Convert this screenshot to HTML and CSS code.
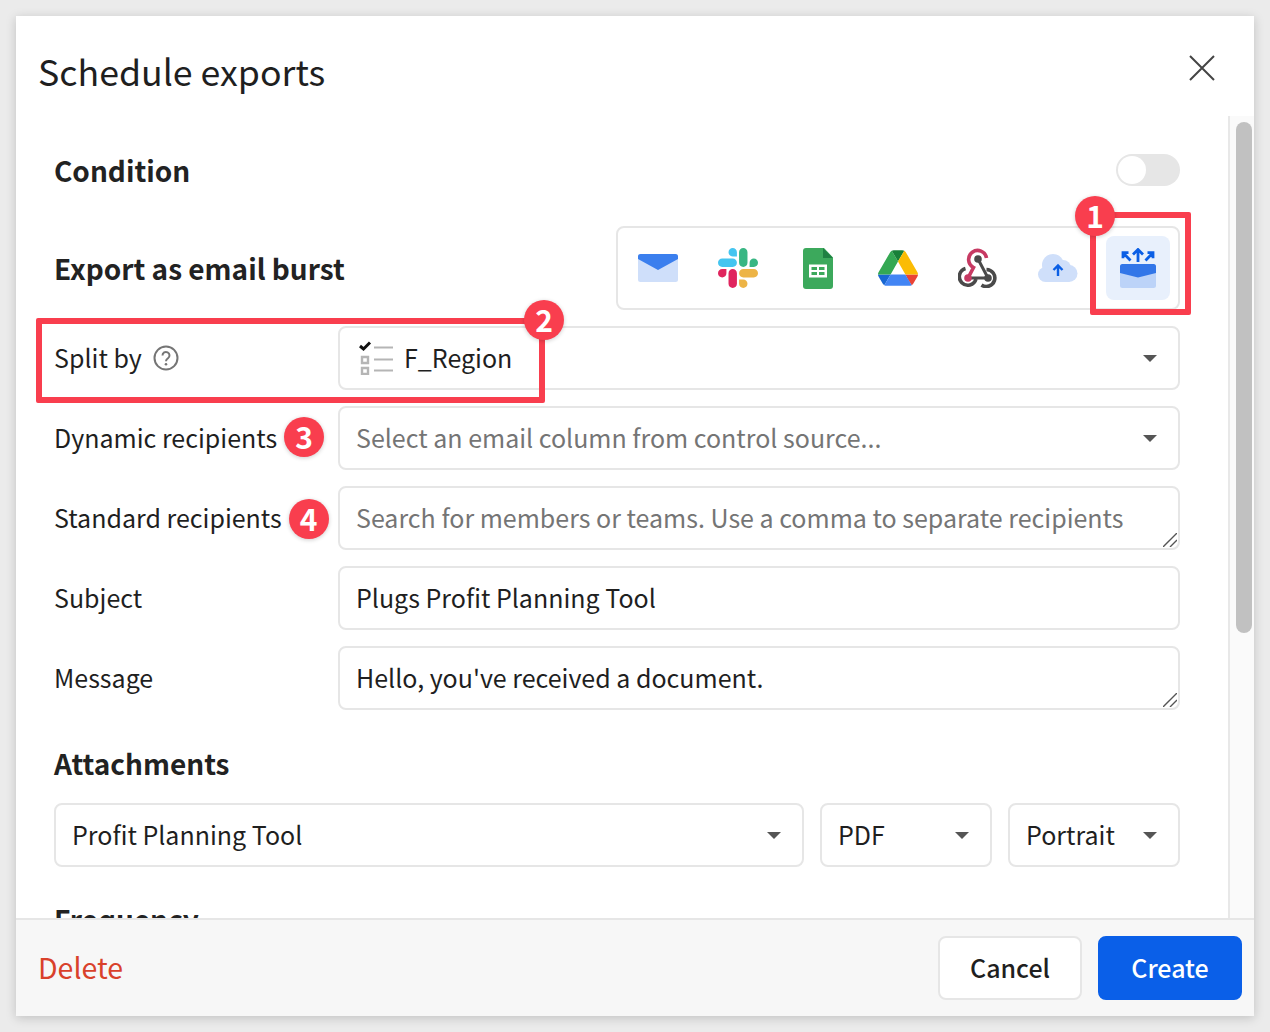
FILE: index.html
```html
<!DOCTYPE html>
<html lang="en">
<head>
<meta charset="UTF-8" />
<meta name="viewport" content="width=device-width, initial-scale=1.0" />
<title>Schedule exports</title>
<link rel="stylesheet" href="styles.css">
</head>
<body>
  <div class="dialog">
    <header class="dialog-head">
      <h1>Schedule exports</h1>
      <svg class="close" width="26" height="26" viewBox="0 0 26 26"><path d="M1 1l24 24M25 1L1 25" fill="none" stroke="#444" stroke-width="2"/></svg>
    </header>

    <div class="dialog-body">
      <div class="content">
        <div class="row-head">
          <h2>Condition</h2>
          <div class="toggle"><span class="knob"></span></div>
        </div>

        <div class="row-head row-export">
          <h2>Export as email burst</h2>
          <div class="targets">
            <div class="target">
              <svg width="40" height="28" viewBox="0 0 40 28"><rect width="40" height="28" rx="2.500" fill="#cfdffa"/><path d="M0 2.500A2.500 2.500 0 0 1 2.500 0h35A2.500 2.500 0 0 1 40 2.500V5L20 16 0 5z" fill="#3b7fee"/></svg>
            </div>
            <div class="target">
              <svg width="40" height="40" viewBox="0 0 122.800 122.800">
                <path d="M25.800 77.600c0 7.100-5.800 12.900-12.900 12.900S0 84.700 0 77.600s5.800-12.900 12.900-12.900h12.900v12.900zm6.500 0c0-7.100 5.800-12.900 12.900-12.900s12.900 5.800 12.900 12.900v32.300c0 7.100-5.800 12.900-12.900 12.900s-12.900-5.800-12.900-12.900V77.600z" fill="#e0255e"/>
                <path d="M45.200 25.800c-7.100 0-12.900-5.800-12.900-12.900S38.100 0 45.200 0s12.900 5.800 12.900 12.900v12.900H45.200zm0 6.500c7.100 0 12.900 5.800 12.900 12.900s-5.800 12.900-12.900 12.900H12.900C5.800 58.100 0 52.300 0 45.200s5.800-12.900 12.900-12.900h32.300z" fill="#45c5f0"/>
                <path d="M97 45.200c0-7.100 5.800-12.900 12.900-12.900s12.900 5.800 12.900 12.900-5.800 12.900-12.900 12.900H97V45.200zm-6.500 0c0 7.100-5.800 12.900-12.900 12.900s-12.900-5.800-12.900-12.900V12.900C64.700 5.800 70.500 0 77.600 0s12.900 5.800 12.900 12.900v32.300z" fill="#38b683"/>
                <path d="M77.600 97c7.100 0 12.900 5.800 12.900 12.900s-5.800 12.900-12.900 12.900-12.900-5.800-12.900-12.900V97h12.900zm0-6.500c-7.100 0-12.900-5.800-12.900-12.900s5.800-12.900 12.900-12.900h32.300c7.100 0 12.900 5.800 12.900 12.900s-5.800 12.900-12.900 12.900H77.600z" fill="#edb446"/>
              </svg>
            </div>
            <div class="target">
              <svg width="30" height="41" viewBox="0 0 30 41">
                <path d="M3 0h18l9 9.500V38a3 3 0 0 1-3 3H3a3 3 0 0 1-3-3V3a3 3 0 0 1 3-3z" fill="#3ca95c"/>
                <path d="M20 0l10 10H20z" fill="#1f8043"/>
                <path d="M6 16.500h18v13H6z" fill="#fff"/>
                <path d="M8.500 19h5.500v3H8.500zM16 19h5.500v3H16zM8.500 24h5.500v3H8.500zM16 24h5.500v3H16z" fill="#3ca95c"/>
              </svg>
            </div>
            <div class="target">
              <svg width="40" height="36" viewBox="0 0 87.300 78">
                <path d="M6.600 66.850l3.850 6.650c.8 1.400 1.950 2.500 3.300 3.300l13.750-23.800H0c0 1.550.4 3.100 1.200 4.500z" fill="#1967d2"/>
                <path d="M43.650 25L29.900 1.200c-1.350.8-2.500 1.900-3.300 3.300L1.200 48.500A9.060 9.060 0 0 0 0 53h27.500z" fill="#34a853"/>
                <path d="M73.550 76.800c1.350-.8 2.500-1.900 3.300-3.300l1.600-2.750 7.650-13.250c.8-1.400 1.200-2.950 1.200-4.500H59.800l5.850 11.500z" fill="#ea4335"/>
                <path d="M43.650 25L57.400 1.200C56.050.4 54.500 0 52.900 0H34.400c-1.600 0-3.150.45-4.500 1.200z" fill="#188038"/>
                <path d="M59.800 53H27.500L13.750 76.800c1.350.8 2.900 1.200 4.500 1.200h50.800c1.600 0 3.150-.45 4.500-1.200z" fill="#4285f4"/>
                <path d="M73.400 26.500l-12.700-22c-.8-1.400-1.950-2.500-3.300-3.300L43.650 25 59.800 53h27.450c0-1.550-.4-3.100-1.200-4.500z" fill="#fbbc04"/>
              </svg>
            </div>
            <div class="target">
              <svg width="40" height="40" viewBox="0 0 40 40" fill="none" stroke-width="3.600">
                <path d="M10 30l5.500-10.500A9 9 0 1 1 28.500 10" stroke="#c73a63"/>
                <path d="M20 11l10 19H11" stroke="#4a4a4a" stroke-width="3"/>
                <path d="M7.500 20.500A8.500 8.500 0 1 0 18 31M28.500 21.500A8.500 8.500 0 1 1 23.500 37" stroke="#4a4a4a"/>
                <circle cx="20" cy="11" r="3.800" fill="#4a4a4a" stroke="none"/>
                <circle cx="10" cy="30" r="3.800" fill="#c73a63" stroke="none"/>
                <circle cx="30" cy="30" r="3.800" fill="#4a4a4a" stroke="none"/>
              </svg>
            </div>
            <div class="target">
              <svg width="40" height="28" viewBox="0 0 40 28">
                <g fill="#cfdffa"><circle cx="15" cy="11" r="11"/><circle cx="7.500" cy="20.500" r="7.500"/><circle cx="31" cy="19.500" r="8.500"/><circle cx="25" cy="14" r="8"/><rect x="7.500" y="14" width="24" height="14"/></g>
                <path d="M20 22v-10M15.500 16l4.500-4.500 4.500 4.500" fill="none" stroke="#0b5fe5" stroke-width="2.400"/>
              </svg>
            </div>
            <div class="target target-active">
              <svg width="36" height="40" viewBox="0 0 36 40">
                <path d="M18 14V1.500M13 6.500l5-5 5 5M10.500 12.500L3 4.700M8.500 4.700H3v5.600M25.500 12.500L33 4.700M27.500 4.700H33v5.600" fill="none" stroke="#0b5fe5" stroke-width="2.800"/>
                <rect y="16" width="36" height="24" rx="2.500" fill="#bcd3f8"/>
                <path d="M0 18.500A2.500 2.500 0 0 1 2.500 16h31a2.500 2.500 0 0 1 2.500 2.500V25l-18 4.500L0 25z" fill="#3276e8"/>
              </svg>
            </div>
          </div>
        </div>

        <div class="field">
          <div class="field-label">Split by
            <svg class="help" width="26" height="26" viewBox="0 0 26 26"><circle cx="13" cy="13" r="11.500" fill="none" stroke="#757575" stroke-width="2"/><path d="M9.500 10.500a3.500 3.500 0 1 1 5.500 2.800c-1.300.9-2 1.500-2 3" fill="none" stroke="#757575" stroke-width="2"/><circle cx="13" cy="19.300" r="1.300" fill="#757575"/></svg>
          </div>
          <div class="select">
            <svg class="col-icon" width="34" height="34" viewBox="0 0 34 34">
              <path d="M1 5l3.500 3L11 1.500" fill="none" stroke="#111" stroke-width="3"/>
              <path d="M15 6.500h19M15 18.500h19M15 29.500h19" stroke="#b5b5b5" stroke-width="2"/>
              <path d="M3 16h6v6H3zM3 27h6v6H3z" fill="none" stroke="#b5b5b5" stroke-width="2.400"/>
            </svg>
            <span class="value">F_Region</span>
            <span class="caret"></span>
          </div>
        </div>

        <div class="field">
          <div class="field-label">Dynamic recipients <span class="badge">3</span></div>
          <div class="select"><span class="placeholder">Select an email column from control source...</span><span class="caret"></span></div>
        </div>

        <div class="field">
          <div class="field-label">Standard recipients <span class="badge badge-low">4</span></div>
          <div class="input-wrap">
            <textarea class="input" placeholder="Search for members or teams. Use a comma to separate recipients"></textarea>
            <svg class="grip" width="14" height="14" viewBox="0 0 14 14"><path d="M0 14L14 0M7 14l7-7" fill="none" stroke="#555" stroke-width="1.400"/></svg>
          </div>
        </div>

        <div class="field">
          <div class="field-label">Subject</div>
          <input class="input" type="text" value="Plugs Profit Planning Tool">
        </div>

        <div class="field">
          <div class="field-label">Message</div>
          <div class="input-wrap">
            <textarea class="input">Hello, you've received a document.</textarea>
            <svg class="grip" width="14" height="14" viewBox="0 0 14 14"><path d="M0 14L14 0M7 14l7-7" fill="none" stroke="#555" stroke-width="1.400"/></svg>
          </div>
        </div>

        <h2 class="section">Attachments</h2>
        <div class="attach">
          <div class="select grow"><span class="value">Profit Planning Tool</span><span class="caret"></span></div>
          <div class="select format"><span class="value">PDF</span><span class="caret"></span></div>
          <div class="select orient"><span class="value">Portrait</span><span class="caret"></span></div>
        </div>

        <h2 class="section section-freq">Frequency</h2>
      </div>
      <div class="track"><div class="thumb"></div></div>
    </div>

    <footer class="dialog-foot">
      <a class="delete">Delete</a>
      <div class="actions">
        <button class="btn">Cancel</button>
        <button class="btn btn-primary">Create</button>
      </div>
    </footer>

    <!-- callouts drawn over the dialog -->
    <div class="callout callout-1"></div>
    <div class="callout callout-2"></div>
    <span class="badge badge-1">1</span>
    <span class="badge badge-2">2</span>
  </div>
</body>
</html>
```

FILE: styles.css
```css
*{box-sizing:border-box;}
html,body{height:100%;}
body{margin:0;padding:16px;background:#ebebeb;color:#1f1f1f;font-family:"Noto Sans CJK JP","Noto Sans",sans-serif;overflow:hidden;}
h1,h2{margin:0;}

.dialog{position:relative;display:flex;flex-direction:column;height:1000px;background:#fff;box-shadow:0 2px 10px rgba(0,0,0,.18);}
.dialog-head{flex:none;display:flex;align-items:center;justify-content:space-between;height:100px;padding:10px 39px 0 22px;}
h1{font-size:35.700px;line-height:50px;font-weight:400;}
.close{display:block;margin-top:-6px;}

.dialog-body{flex:1;display:flex;min-height:0;overflow:hidden;}
.content{flex:1;min-width:0;padding:34px 48px 0 38px;overflow:hidden;}
.track{flex:none;width:26px;padding:6px 2px 0 6px;background:#fafafa;border-left:2px solid #e8e8e8;}
.thumb{height:511px;background:#c1c1c1;border-radius:8px;}

.row-head{display:flex;align-items:center;justify-content:space-between;}
h2{font-size:28px;line-height:40px;font-weight:600;color:#222;}
.toggle{width:64px;height:32px;padding:2px;background:#e6e6e6;border-radius:16px;}
.knob{display:block;width:28px;height:28px;background:#fff;border-radius:50%;}

.row-export{margin:36px 0 16px;}
.targets{display:flex;gap:16px;padding:8px;border:2px solid #e6e6e6;border-radius:8px;}
.target{display:flex;align-items:center;justify-content:center;width:64px;height:64px;border-radius:8px;}
.target-active{background:#e8f0fc;}

.field{display:flex;align-items:center;margin-bottom:16px;}
.field-label{flex:none;display:flex;align-items:center;gap:7px;width:284px;height:40px;padding-bottom:2px;font-size:25px;line-height:38px;white-space:nowrap;}
.help{margin:2px 0 0 4px;}

.select,.input{flex:1;min-width:0;height:64px;border:2px solid #e6e6e6;border-radius:8px;background:#fff;font:inherit;font-size:25px;color:#1f1f1f;}
.select{display:flex;align-items:center;padding:0 21px 2px 16px;}
.input{display:block;width:100%;padding:0 16px 2px;outline:none;}
textarea.input{padding-top:9px;line-height:40px;resize:none;overflow:hidden;}
.input::placeholder,.placeholder{color:#757575;opacity:1;}
.input-wrap{position:relative;flex:1;min-width:0;}
.grip{position:absolute;right:3px;bottom:3px;}
.col-icon{margin:2px 11px 0 3px;}
.caret{margin:2px 0 0 auto;width:0;height:0;border-left:7px solid transparent;border-right:7px solid transparent;border-top:7px solid #555;}

.badge{display:flex;align-items:center;justify-content:center;flex:none;width:40px;height:40px;margin-right:-40px;border-radius:50%;background:#f93e4e;color:#fff;font-size:30px;line-height:36px;font-weight:700;padding-bottom:2px;box-shadow:0 1px 4px rgba(0,0,0,.2);}
.badge-low{margin-top:4px;}

.section{margin:33px 0 20px;}
.attach{display:flex;gap:16px;}
.format{flex:none;width:172px;}
.orient{flex:none;width:172px;}
.section-freq{margin-top:32px;}

.dialog-foot{position:relative;flex:none;display:flex;align-items:center;justify-content:space-between;height:98px;padding:0 12px 0 22px;background:#f7f7f7;border-top:2px solid #e6e6e6;}
.delete{font-size:28.500px;line-height:40px;margin-bottom:2px;color:#d9412b;}
.actions{display:flex;gap:16px;}
.btn{width:144px;height:64px;padding:0 0 2px;border:2px solid #e6e6e6;border-radius:8px;background:#fff;font:inherit;font-size:25px;font-weight:500;color:#1f1f1f;}
.btn-primary{background:#0a5fe8;border-color:#0a5fe8;color:#fff;}

.callout{position:absolute;border:6px solid #f93e4e;border-radius:2px;pointer-events:none;}
.callout-1{left:1074px;top:196px;width:101px;height:103px;}
.callout-2{left:20px;top:302px;width:509px;height:85px;}
.badge-1,.badge-2{position:absolute;margin:0;}
.badge-1{left:1059px;top:180px;}
.badge-2{left:508px;top:284px;}
```
